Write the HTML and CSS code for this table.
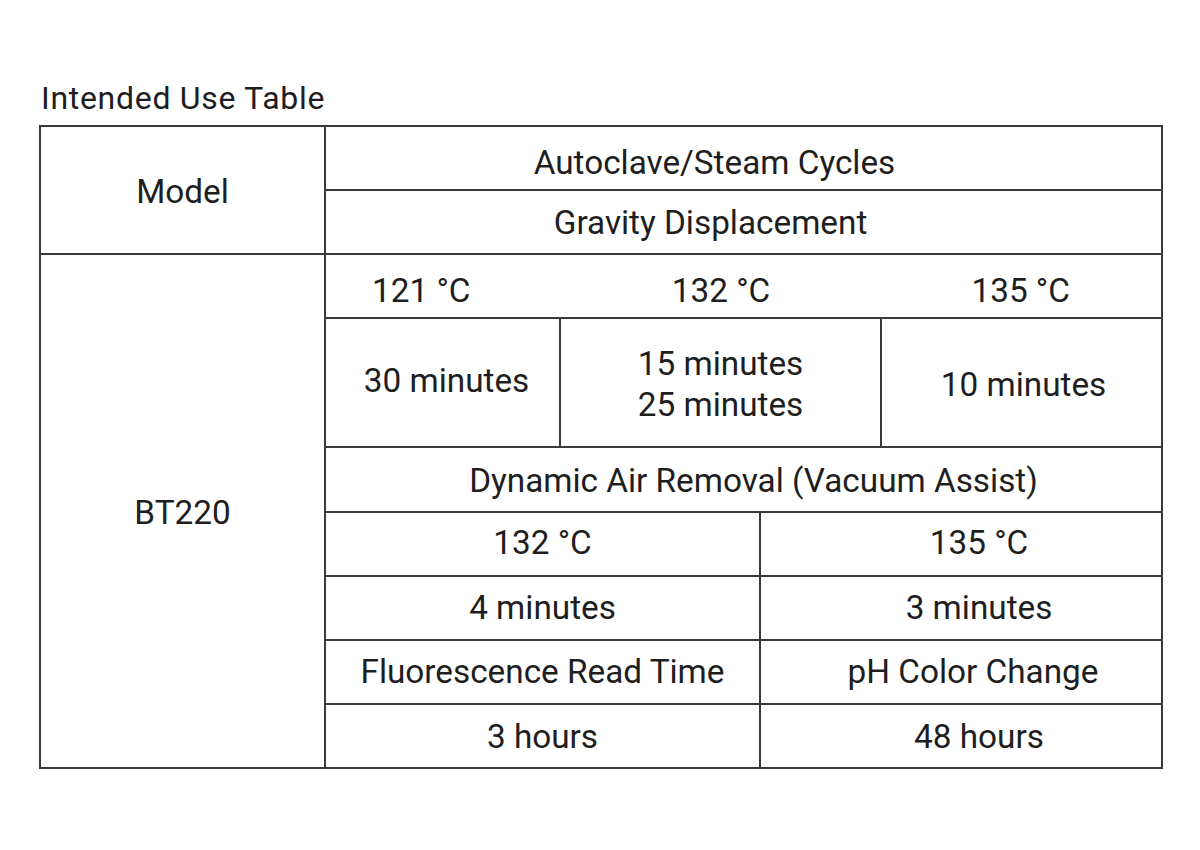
FILE: index.html
```html
<!DOCTYPE html>
<html>
<head>
<meta charset="utf-8">
<link rel="stylesheet" href="styles.css">
</head>
<body>
<div class="page">
  <h1 class="title">Intended Use Table</h1>
  <div class="tbl">
    <div class="cell model">Model</div>
    <div class="cell span-all autoclave">Autoclave/Steam Cycles</div>
    <div class="cell span-all gravity">Gravity Displacement</div>
    <div class="cell bt">BT220</div>
    <div class="cell span-all temps"><span>121 °C</span><span>132 °C</span><span>135 °C</span></div>
    <div class="cell c2">30 minutes</div>
    <div class="cell c34 multi"><span>15 minutes</span><span>25 minutes</span></div>
    <div class="cell c5">10 minutes</div>
    <div class="cell span-all dynamic">Dynamic Air Removal (Vacuum Assist)</div>
    <div class="cell left raise">132 °C</div>
    <div class="cell right raise">135 °C</div>
    <div class="cell left">4 minutes</div>
    <div class="cell right">3 minutes</div>
    <div class="cell left">Fluorescence Read Time</div>
    <div class="cell right ph">pH Color Change</div>
    <div class="cell left last">3 hours</div>
    <div class="cell right last">48 hours</div>
  </div>
</div>
</body>
</html>
```

FILE: styles.css
```css
html, body {
  margin: 0;
  padding: 0;
  background: #ffffff;
}

.page {
  padding: 80px 0 0 39px;
  font-family: Roboto, "Liberation Sans", sans-serif;
  color: #1e1e1e;
}

.title {
  margin: 0 0 9px 0;
  padding-left: 2px;
  font-size: 32px;
  letter-spacing: 0.7px;
  font-weight: 400;
  line-height: 36px;
}

.tbl {
  display: grid;
  width: max-content;
  grid-template-columns: 285px 235px 200px 121px 281px;
  grid-template-rows: 64px 64px 64px 129px 65px 64px 64px 64px 64px;
  border-top: 2px solid #3a3a3a;
  border-left: 2px solid #3a3a3a;
}

.cell {
  box-sizing: border-box;
  border-right: 2px solid #3a3a3a;
  border-bottom: 2px solid #3a3a3a;
  display: flex;
  align-items: center;
  justify-content: center;
  font-size: 33.3px;
  line-height: 38px;
  white-space: nowrap;
}

.model {
  grid-column: 1 / 2;
  grid-row: 1 / 3;
  padding-top: 4px;
}

.bt {
  grid-column: 1 / 2;
  grid-row: 3 / 10;
  padding-top: 4px;
}

.span-all {
  grid-column: 2 / 6;
}

.autoclave {
  padding-top: 10px;
  padding-right: 58px;
}

.gravity {
  padding-top: 2px;
  padding-right: 66px;
}

.temps {
  justify-content: space-between;
  padding-top: 10px;
  padding-left: 46px;
  padding-right: 91px;
}

.dynamic {
  padding-top: 2px;
  padding-left: 20px;
}

.c2 {
  grid-column: 2 / 3;
  padding-left: 8px;
  padding-bottom: 4px;
}

.c34 {
  grid-column: 3 / 5;
  padding-top: 2px;
}

.c5 {
  grid-column: 5 / 6;
  padding-left: 4px;
  padding-top: 4px;
}

.multi {
  flex-direction: column;
  line-height: 41px;
}

.left {
  grid-column: 2 / 4;
}

.right {
  grid-column: 4 / 6;
  padding-left: 36px;
}

.raise {
  padding-bottom: 3px;
}

.ph {
  padding-left: 24px;
}

.last {
  padding-top: 2px;
}
```
